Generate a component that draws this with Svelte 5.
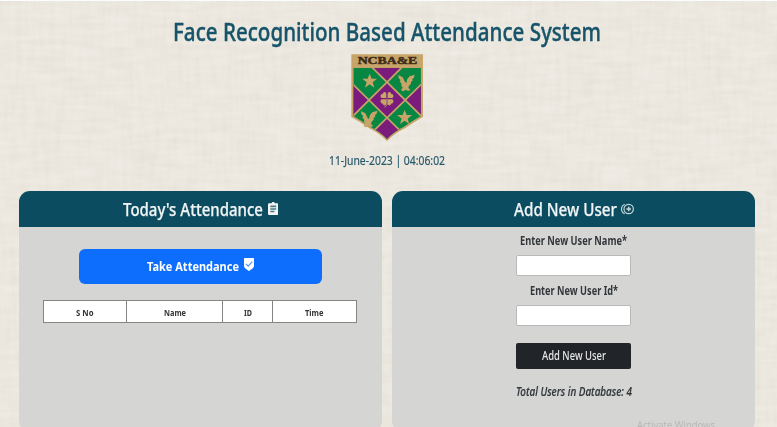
<script>
  const columns = [
    { label: 'S No', width: 17.5, cell: 83 },
    { label: 'Name', width: 22, cell: 96 },
    { label: 'ID', width: 8, cell: 50 },
    { label: 'Time', width: 18.5, cell: 84 }
  ];

  // Condenses a line of text horizontally to the given width.
  function fit(node, width) {
    const inner = node.firstElementChild;
    node.style.width = width + 'px';
    inner.style.transform = `scaleX(${width / inner.offsetWidth})`;
    const natural = inner.getBoundingClientRect().width;
    inner.style.transform = `scaleX(${(width / inner.offsetWidth) * (width / natural)})`;
  }
</script>

{#snippet line(text, width)}
  <span class="fit" use:fit={width}><span>{text}</span></span>
{/snippet}

<main>
  <svg class="linen" width="777" height="427" aria-hidden="true">
    <filter id="warp" x="0" y="0" width="100%" height="100%">
      <feTurbulence type="fractalNoise" baseFrequency="0.18 0.03" numOctaves="2" seed="4" />
      <feColorMatrix values="0 0 0 0 .63  0 0 0 0 .6  0 0 0 0 .52  .35 0 0 0 -.13" />
    </filter>
    <filter id="weft" x="0" y="0" width="100%" height="100%">
      <feTurbulence type="fractalNoise" baseFrequency="0.03 0.18" numOctaves="2" seed="9" />
      <feColorMatrix values="0 0 0 0 .96  0 0 0 0 .95  0 0 0 0 .92  .5 0 0 0 -.12" />
    </filter>
    <rect width="777" height="427" filter="url(#warp)" />
    <rect width="777" height="427" filter="url(#weft)" />
  </svg>

  <header>
    <h1>{@render line('Face Recognition Based Attendance System', 428)}</h1>
    <svg class="crest" viewBox="33 18 217 261" width="72.3" height="87">
      <defs>
        <clipPath id="shield"><path d="M40 59H243V204Q218 218 192 236Q160 251 141 273Q122 251 90 236Q64 218 40 204Z" /></clipPath>
        <path id="star" d="M0-22L6-7H22L9 4L14 20L0 10L-14 20L-9 4L-22-7H-6Z" />
        <path id="bird" d="M-23-24L-10-17L-3-3L1 0L4-12L11-20L26-25L24-16L19-12L20-7L15-4L15 2L9 8L7 15L14 21L6 24L0 20L-8 25L-15 22L-10 14L-14 8L-13 3L-19-5L-16-8L-22-15Z" />
      </defs>
      <path fill="#c7a467" d="M34 19H249V207Q222 222 195 241Q164 256 141 279Q118 256 88 241Q61 222 34 207Z" />
      <g clip-path="url(#shield)">
        <rect x="34" y="59" width="215" height="220" fill="#088743" />
        <path fill="#7b1c7c" d="M99 59H185L141 103ZM141 103L195 156L141 209L88 156ZM34 104L88 156L34 209ZM249 104L195 156L249 209ZM141 209L214 279H68Z" />
        <path fill="none" stroke="#c7a467" stroke-width="5" d="M97 59L249 209M185 59L34 209M34 104L214 281M249 104L68 281" />
      </g>
      <g fill="#c7a467">
        <use href="#star" x="89" y="99" />
        <use href="#star" x="194" y="208" />
        <use href="#bird" x="198" y="105" />
        <use href="#bird" x="86" y="213" />
        <g transform="translate(141 152)">
          <path id="leaf" d="M-2-2H-15Q-22-5-18-12Q-16-15-12-15Q-12-21-6-20Q-1-18-2-12Z" />
          <use href="#leaf" transform="scale(-1 1)" />
          <use href="#leaf" transform="scale(1 -1)" />
          <use href="#leaf" transform="scale(-1 -1)" />
          <path fill="none" stroke="#c7a467" stroke-width="3" d="M0 0V18L-7 26" />
        </g>
      </g>
      <text x="53" y="47" textLength="179" lengthAdjust="spacingAndGlyphs">NCBA&amp;E</text>
    </svg>
    <p class="clock">{@render line('11-June-2023 | 04:06:02', 116)}</p>
  </header>

  <div class="panels">
    <section>
      <h2>
        {@render line("Today's Attendance", 140)}
        <svg class="clip" viewBox="3 1 18 21" width="10.5" height="13" preserveAspectRatio="none">
          <path fill="#f2f5f4" d="M19 3h-4.2C14.4 1.8 13.3 1 12 1s-2.4.8-2.8 2H5a2 2 0 0 0-2 2v15a2 2 0 0 0 2 2h14a2 2 0 0 0 2-2V5a2 2 0 0 0-2-2Z" />
          <path fill="#4b7a88" d="M7 6.5h10v3H7zM7 11h10v2.4H7zM7 15h7v2.4H7z" />
        </svg>
      </h2>
      <button class="take">
        {@render line('Take Attendance', 92)}
        <svg class="verified" viewBox="3 1 18 22" width="10" height="13" preserveAspectRatio="none">
          <path fill="#fff" d="M4 1H20L21 2V14C21 18 16 20 12 23C8 20 3 18 3 14V2Z" />
          <path fill="none" stroke="#4a91fd" stroke-width="2" d="M6.5 11L10.5 15L18 7" />
        </svg>
      </button>
      <table>
        <thead>
          <tr>
            {#each columns as column}
              <th style="width: {column.cell}px">{@render line(column.label, column.width)}</th>
            {/each}
          </tr>
        </thead>
      </table>
    </section>

    <section>
      <h2 class="add">
        {@render line('Add New User', 103)}
        <svg class="target" viewBox="0 0 13 12" width="13" height="12" fill="none" stroke="#c3d5d9">
          <circle cx="7.7" cy="6" r="4.7" stroke-width="1.2" />
          <path d="M3.7 1.2A5.2 5.2 0 0 0 3.7 10.8" stroke-width="1.2" />
          <path d="M7.7 3.7V8.3M5.4 6H10" stroke-width="1.6" />
        </svg>
      </h2>
      <form onsubmit={(event) => event.preventDefault()}>
        <label for="username">{@render line('Enter New User Name*', 107)}</label>
        <input id="username" />
        <label for="userid">{@render line('Enter New User Id*', 88)}</label>
        <input id="userid" />
        <button class="dark">{@render line('Add New User', 64)}</button>
        <p class="total">{@render line('Total Users in Database: 4', 116)}</p>
      </form>
    </section>
  </div>
  <div class="notice">{@render line('Activate Windows', 78)}</div>
</main>

<style>
  :global(body) {
    margin: 0;
    overflow: hidden;
  }
  main {
    position: relative;
    box-sizing: border-box;
    width: 777px;
    height: 427px;
    overflow: hidden;
    background: #eae6dd;
    border-top: 1px solid #fbfdfc;
    font-family: 'Noto Sans', 'Open Sans', sans-serif;
  }
  .linen {
    position: absolute;
    inset: 0;
  }
  .fit {
    display: inline-block;
    white-space: nowrap;
    text-align: left;
    flex: none;
  }
  .fit > span {
    display: inline-block;
    transform-origin: left center;
  }
  header {
    position: relative;
    display: flex;
    flex-direction: column;
    align-items: center;
    height: 190px;
    box-sizing: border-box;
    padding-top: 9px;
    padding-right: 3px;
  }
  h1 {
    margin: 0;
    font-size: 26px;
    line-height: 42px;
    font-weight: 500;
    color: #17546a;
    -webkit-text-stroke: 0.4px #17546a;
  }
  .crest {
    margin-top: 2px;
    flex: none;
  }
  .crest text {
    font: bold 31px 'Liberation Serif', serif;
    fill: #3e2c19;
    stroke: #3e2c19;
    stroke-width: 1.5;
  }
  .clock {
    margin: 8.5px 0 0;
    font-size: 13px;
    line-height: 20px;
    color: #28596b;
    -webkit-text-stroke: 0.2px #28596b;
  }
  .panels {
    position: relative;
    display: flex;
    gap: 10px;
    padding-left: 19px;
  }
  section {
    width: 363px;
    height: 241px;
    overflow: hidden;
    border-radius: 11px;
    background: #d5d5d3;
    display: flex;
    flex-direction: column;
    align-items: center;
  }
  h2 {
    box-sizing: border-box;
    width: 100%;
    height: 35.5px;
    margin: 0;
    padding-left: 103.5px;
    display: flex;
    align-items: center;
    background: #0c4c60;
    color: #f0f4f4;
    font-size: 18.5px;
    font-weight: 500;
    line-height: 37px;
    -webkit-text-stroke: 0.25px #f0f4f4;
  }
  h2.add {
    padding-left: 122px;
  }
  .clip {
    margin-left: 5px;
  }
  .target {
    margin-left: 4px;
  }
  button {
    border: 0;
    padding: 0;
    font-family: inherit;
    color: #fff;
    display: flex;
    align-items: center;
    justify-content: center;
  }
  .take {
    width: 243.5px;
    height: 35px;
    margin-top: 22px;
    border-radius: 6px;
    background: #0d6efd;
    font-size: 13px;
    font-weight: 700;
  }
  .verified {
    margin: 0 0 4px 5px;
  }
  table {
    width: 313px;
    margin: 16.5px 1px 0 0;
    table-layout: fixed;
    border-collapse: collapse;
    background: #fff;
    border: 1px solid #858585;
  }
  th {
    height: 22px;
    padding: 2px 0 0;
    box-sizing: border-box;
    border: 1px solid #858585;
    font-size: 8.5px;
    line-height: 19px;
    color: #333;
    text-align: center;
  }
  form {
    display: flex;
    flex-direction: column;
    align-items: center;
  }
  label {
    display: block;
    height: 28px;
    font-size: 12px;
    line-height: 28px;
    font-weight: 700;
    color: #33373c;
  }
  input {
    box-sizing: border-box;
    width: 115px;
    height: 21px;
    padding: 0;
    margin: 0 0 1.5px;
    border: 1px solid #b9b9b9;
    border-radius: 2px;
    background: #fff;
  }
  .dark {
    width: 115.5px;
    height: 26.5px;
    margin-top: 15px;
    border-radius: 2px;
    background: #212529;
    color: #e8e8e8;
    font-size: 12px;
    font-weight: 500;
  }
  .total {
    margin: 12px 0 0;
    font-size: 12px;
    line-height: 22px;
    font-style: italic;
    font-weight: 500;
    color: #30353a;
    -webkit-text-stroke: 0.2px #30353a;
  }
  .notice {
    position: absolute;
    left: 637px;
    top: 417px;
    font-size: 10px;
    line-height: 15px;
    color: #b7b8b8;
  }
</style>
